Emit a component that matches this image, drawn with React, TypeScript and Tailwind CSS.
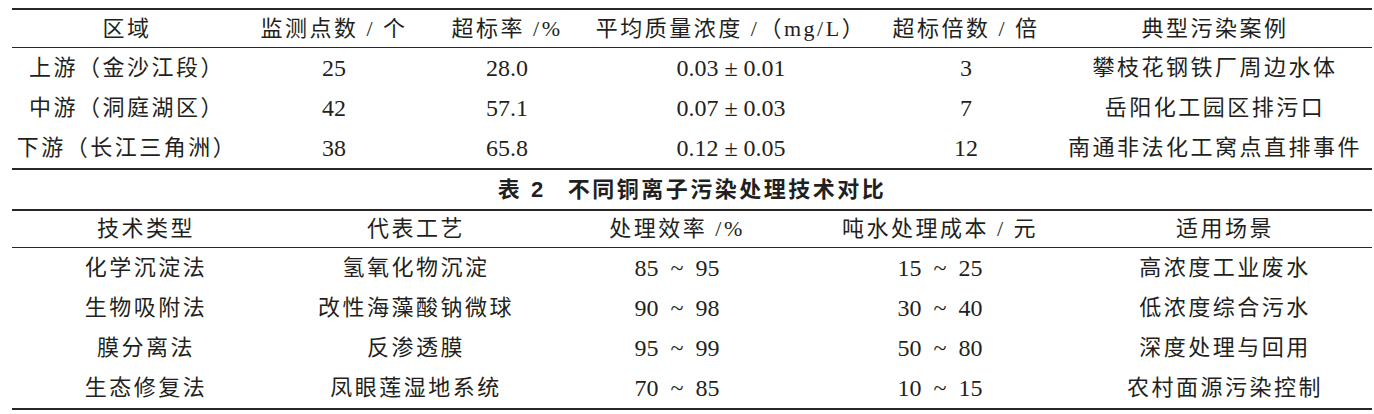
const table1 = {
  cols: "grid-cols-[230px_184px_162px_286px_184px_314px]",
  head: ["区域", "监测点数 / 个", "超标率 /%", "平均质量浓度 /（mg/L）", "超标倍数 / 倍", "典型污染案例"],
  rows: [
    ["上游（金沙江段）", "25", "28.0", "0.03 ± 0.01", "3", "攀枝花钢铁厂周边水体"],
    ["中游（洞庭湖区）", "42", "57.1", "0.07 ± 0.03", "7", "岳阳化工园区排污口"],
    ["下游（长江三角洲）", "38", "65.8", "0.12 ± 0.05", "12", "南通非法化工窝点直排事件"],
  ],
};

const table2 = {
  cols: "grid-cols-[268px_272px_250px_276px_294px]",
  head: ["技术类型", "代表工艺", "处理效率 /%", "吨水处理成本 / 元", "适用场景"],
  rows: [
    ["化学沉淀法", "氢氧化物沉淀", "85 ~ 95", "15 ~ 25", "高浓度工业废水"],
    ["生物吸附法", "改性海藻酸钠微球", "90 ~ 98", "30 ~ 40", "低浓度综合污水"],
    ["膜分离法", "反渗透膜", "95 ~ 99", "50 ~ 80", "深度处理与回用"],
    ["生态修复法", "凤眼莲湿地系统", "70 ~ 85", "10 ~ 15", "农村面源污染控制"],
  ],
};

// numbers only -> bigger serif digits, chinese text gets a little spacing
const isNum = (s) => /^[0-9.±~ ]+$/.test(s);

const Cell = ({ text }) => (
  <div className="flex items-center justify-center whitespace-nowrap">
    <span className={isNum(text) ? "text-[24px]" : "tracking-[2.5px]"}>
      {text.replace(/~/g, "\u00a0~\u00a0")}
    </span>
  </div>
);

const Table = ({ data, headH, rowH }) => (
  <div className="border-t-2 border-b-2 border-[#2a2627]">
    <div className={`grid ${data.cols} ${headH} border-b border-[#2a2627]`}>
      {data.head.map((h) => (
        <Cell key={h} text={h} />
      ))}
    </div>
    {data.rows.map((r, i) => (
      <div key={i} className={`grid ${data.cols} ${rowH}`}>
        {r.map((c, j) => (
          <Cell key={j} text={c} />
        ))}
      </div>
    ))}
  </div>
);

export default function App() {
  return (
    <div className="w-[1374px] h-[414px] bg-white text-[#231f20] overflow-hidden">
      <div className="w-[1360px] ml-[12px] pt-[8px] font-['Liberation_Serif','Noto_Sans_CJK_SC',serif] text-[22px] leading-none">
        <Table data={table1} headH="h-[38px]" rowH="h-[40px]" />
        <div className="h-[39px] flex items-center justify-center font-['Liberation_Sans','Noto_Sans_CJK_SC',sans-serif] font-bold text-[22px] tracking-[2.5px]">
          <span>表 2</span>
          <span className="ml-[22px]">不同铜离子污染处理技术对比</span>
        </div>
        <Table data={table2} headH="h-[37px]" rowH="h-[40px]" />
      </div>
    </div>
  );
}
